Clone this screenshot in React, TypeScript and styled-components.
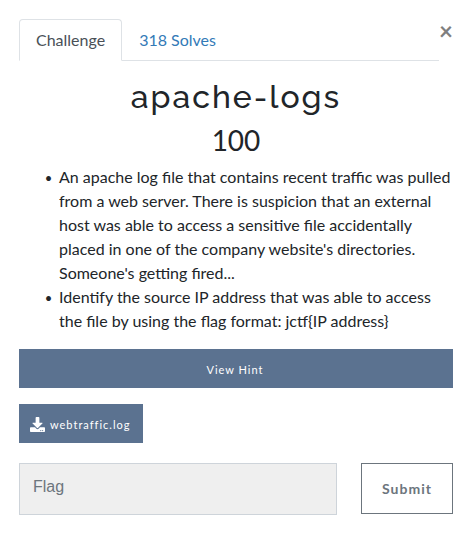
import React from "react";
import styled, { createGlobalStyle } from "styled-components";

const Global = createGlobalStyle`
  *, *::before, *::after { box-sizing: border-box; }
  body {
    margin: 0;
    background: #fff;
    color: #212529;
    font: 400 16px/24px Lato, sans-serif;
  }
  button, input { font-family: inherit; margin: 0; }
`;

const Modal = styled.main`
  padding: 19px 20px 26px 19px;
`;

const Header = styled.header`
  display: flex;
  align-items: flex-start;
`;

const Tabs = styled.nav`
  flex: 1;
  display: flex;
  border-bottom: 1px solid #dee2e6;
`;

const Tab = styled.a<{ $active?: boolean }>`
  padding: 8px 16px;
  margin-bottom: -1px;
  border: 1px solid;
  border-color: ${(p) => (p.$active ? "#dee2e6 #dee2e6 #fff" : "transparent")};
  border-radius: 4px 4px 0 0;
  background: ${(p) => (p.$active ? "#fff" : "transparent")};
  color: ${(p) => (p.$active ? "#495057" : "#337ab7")};
  text-decoration: none;
`;

const Close = styled.button`
  width: 14px;
  padding: 0;
  border: 0;
  background: none;
  color: #7f7f7f;
  font-size: 24px;
  font-weight: 700;
  line-height: 24px;
  cursor: pointer;
`;

const Title = styled.h2`
  margin: 17px 0 7px;
  font: 500 32px/38px Raleway, sans-serif;
  letter-spacing: 2px;
  text-align: center;
`;

const Points = styled.h3`
  margin: 0 0 8px;
  font-size: 28px;
  font-weight: 400;
  line-height: 34px;
  text-align: center;
`;

const Description = styled.ul`
  margin: 0 0 16px;
  padding-left: 40px;
  list-style-type: "•  ";

  li::marker { font-size: 13px; }
`;

const SolidButton = styled.button<{ $block?: boolean }>`
  display: flex;
  align-items: center;
  justify-content: center;
  gap: 5px;
  width: ${(p) => (p.$block ? "100%" : "auto")};
  height: 39px;
  margin-bottom: 16px;
  padding: 2px 13px 0 11px;
  border: 0;
  background: #5b7290;
  color: #fff;
  font-size: 11px;
  letter-spacing: 1px;
  cursor: pointer;
`;

const SubmitRow = styled.form`
  display: flex;
  align-items: flex-start;
  gap: 24px;
  margin-top: 20px;
`;

const FlagInput = styled.input`
  flex: 1;
  min-width: 0;
  height: 52px;
  padding: 0 13px 4px;
  border: 1px solid #ced4da;
  border-radius: 0;
  background: #efefef;
  color: #495057;
  && { font-family: "Liberation Sans", sans-serif; }
  font-size: 16px;
  &::placeholder { color: #6c757d; opacity: 1; }
`;

const Submit = styled.button`
  width: 92px;
  height: 51px;
  padding: 0;
  border: 1px solid #6c757d;
  background: #fff;
  color: #6c757d;
  font-size: 14px;
  font-weight: 700;
  letter-spacing: 1px;
  cursor: pointer;
`;

const DownloadIcon = () => (
  <svg width="15" height="15" viewBox="0 0 512 512" fill="currentColor" aria-hidden="true">
    <path d="M216 0h80c13.300 0 24 10.700 24 24v168h87.700c17.800 0 26.700 21.500 14.100 34.100L269.700 378.300c-7.500 7.500-19.800 7.500-27.300 0L90.100 226.100c-12.600-12.600-3.700-34.100 14.100-34.100H192V24c0-13.300 10.700-24 24-24zm296 376v112c0 13.300-10.700 24-24 24H24c-13.300 0-24-10.700-24-24V376c0-13.300 10.700-24 24-24h146.700l49 49c20.100 20.100 52.500 20.100 72.600 0l49-49H488c13.300 0 24 10.700 24 24zm-124 88c0-11-9-20-20-20s-20 9-20 20 9 20 20 20 20-9 20-20zm64 0c0-11-9-20-20-20s-20 9-20 20 9 20 20 20 20-9 20-20z" />
  </svg>
);

export default function App() {
  return (
    <>
      <Global />
      <Modal>
        <Header>
          <Tabs>
            <Tab href="#challenge" $active>Challenge</Tab>
            <Tab href="#solves">318 Solves</Tab>
          </Tabs>
          <Close type="button" aria-label="Close">×</Close>
        </Header>
        <Title>apache-logs</Title>
        <Points>100</Points>
        <Description>
          <li>
            An apache log file that contains recent traffic was pulled from a web server. There is
            suspicion that an external host was able to access a sensitive file accidentally placed in
            one of the company website's directories. Someone's getting fired...
          </li>
          <li>
            Identify the source IP address that was able to access the file by using the flag format:
            jctf&#123;IP address&#125;
          </li>
        </Description>
        <SolidButton type="button" $block>View Hint</SolidButton>
        <SolidButton type="button">
          <DownloadIcon />
          webtraffic.log
        </SolidButton>
        <SubmitRow onSubmit={(e) => e.preventDefault()}>
          <FlagInput type="text" placeholder="Flag" aria-label="Flag" />
          <Submit type="submit">Submit</Submit>
        </SubmitRow>
      </Modal>
    </>
  );
}
